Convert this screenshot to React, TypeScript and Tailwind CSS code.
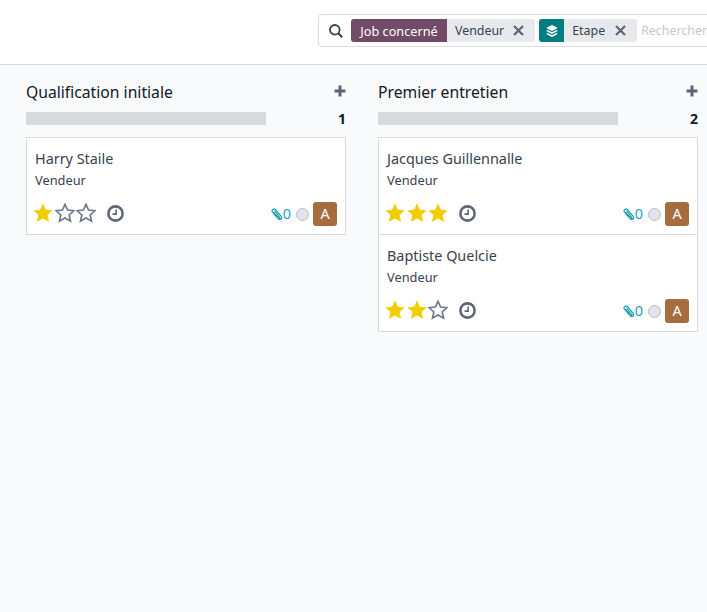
import React from "react";

const STAR = "M12 1.6l3.1 6.9 7.5.8-5.6 5.05 1.6 7.4L12 18l-6.6 3.75 1.6-7.4L1.4 9.3l7.5-.8z";

function Star({ on }: { on: boolean }) {
  return (
    <svg width="20" height="20" viewBox="0 0 24 24" className="shrink-0">
      <path d={STAR} fill={on ? "#f3cc00" : "#ffffff"} stroke={on ? "#f3cc00" : "#6b7a90"} strokeWidth={on ? 1 : 2} strokeLinejoin="miter" />
    </svg>
  );
}

function Clock() {
  return (
    <svg width="17" height="17" viewBox="0 0 16 16" className="shrink-0">
      <circle cx="8" cy="8" r="6.7" fill="none" stroke="#5f6478" strokeWidth="2.4" />
      <path d="M8.6 4.2v4.4H5.2" fill="none" stroke="#5f6478" strokeWidth="1.5" />
    </svg>
  );
}

function Clip() {
  return (
    <svg width="12" height="14" viewBox="0 0 12 13" className="shrink-0">
      <path
        d="M3.6 3.4l5 6.4c.9 1.2-.6 2.4-1.6 1.4L1.4 4.6C.2 3 2.4.4 4.2 1.8l6 7c1.6 2-1.2 4.4-3 2.6"
        fill="none"
        stroke="#17a2b8"
        strokeWidth="1.2"
      />
      <path d="M2.4 4.4l5.4 6.4" fill="none" stroke="#017e84" strokeWidth="1" />
    </svg>
  );
}

function Card({ name, stars, first }: { name: string; stars: number; first?: boolean }) {
  return (
    <div className={`bg-white border border-[#d8dadd] h-[98px] px-2 pt-[10px] ${first ? "" : "-mt-px"}`}>
      <div className="text-[14.4px] leading-[22px] text-[#374151]">{name}</div>
      <div className="text-[12.8px] leading-[18px] mt-[1px] text-[#374151]">Vendeur</div>
      <div className="flex items-center mt-[13px] h-6">
        <div className="flex items-center gap-[1.5px] -ml-[2px] -mt-[3px]">
          {[0, 1, 2].map((i) => (
            <Star key={i} on={i < stars} />
          ))}
        </div>
        <div className="ml-[11px] -mt-px">
          <Clock />
        </div>
        <div className="ml-auto flex items-center">
          <Clip />
          <span className="text-[14.4px] leading-none text-[#17a2b8]">0</span>
          <span className="ml-[5px] w-[13px] h-[13px] rounded-full bg-[#e2e4e9] border border-[#b8bcc4]" />
          <span className="ml-[4px] w-6 h-6 rounded-[3px] bg-[#a56d3e] text-white text-[14.4px] flex items-center justify-center">A</span>
        </div>
      </div>
    </div>
  );
}

function Column({ title, count, children }: { title: string; count: number; children: React.ReactNode }) {
  return (
    <div className="w-[320px] shrink-0">
      <div className="flex items-center justify-between h-[28px]">
        <span className="text-[15.7px] text-[#111827] pt-[2px]">{title}</span>
        <svg width="12" height="12" viewBox="0 0 12 12" className="mb-[3px] -ml-px">
          <path d="M6 .5v11M.5 6h11" stroke="#5f6478" strokeWidth="3" />
        </svg>
      </div>
      <div className="flex items-center justify-between mt-[6px] h-[13px]">
        <div className="w-[240px] h-[13px] bg-[#d8dadd]" />
        <span className="text-[14px] font-bold leading-none text-[#111827]">{count}</span>
      </div>
      <div className="mt-3">{children}</div>
    </div>
  );
}

function Close() {
  return (
    <svg width="11" height="11" viewBox="0 0 11 11" className="shrink-0">
      <path d="M1 1l9 9M10 1l-9 9" stroke="#5f6478" strokeWidth="2.2" />
    </svg>
  );
}

export default function App() {
  return (
    <div
      className="w-[707px] h-[612px] overflow-hidden bg-[#f9fafb] flex flex-col"
      style={{ fontFamily: '"Noto Sans", sans-serif' }}
    >
      <div className="h-[65px] shrink-0 bg-white border-b border-[#d8dadd] pl-[318px] pt-[14px]">
        <div className="w-[500px] h-[33px] border border-[#d8dadd] rounded-[4px] bg-white flex items-center pl-[10px] text-[12.4px] leading-none">
          <svg width="14" height="14" viewBox="0 0 14 14" className="shrink-0">
            <circle cx="5.8" cy="5.8" r="4.8" fill="none" stroke="#374151" strokeWidth="1.8" />
            <path d="M9.2 9.2l4 4" stroke="#374151" strokeWidth="2" />
          </svg>
          <div className="ml-2 flex items-center h-[23px] rounded-[3px] overflow-hidden bg-[#e7e9ed]">
            <span className="h-full w-24 bg-[#714b67] text-white text-[12.7px] pt-px flex items-center justify-center">Job concerné</span>
            <span className="text-[#374151] ml-2 pt-[2px]">Vendeur</span>
            <span className="ml-[9px] mr-[11px]">
              <Close />
            </span>
          </div>
          <div className="ml-1 flex items-center h-[23px] rounded-[3px] overflow-hidden bg-[#e7e9ed]">
            <span className="h-full w-[25px] bg-[#017e84] flex items-center justify-center">
              <svg width="14" height="14" viewBox="0 0 14 14">
                <path d="M7 1L1.2 4 7 7l5.8-3z" fill="#ffffff" />
                <path d="M2.6 6L1.2 7 7 10l5.8-3-1.4-1L7 8.2z" fill="#ffffff" />
                <path d="M2.6 9l-1.4 1L7 13l5.8-3-1.4-1L7 11.2z" fill="#ffffff" />
              </svg>
            </span>
            <span className="text-[#374151] ml-2 pt-[2px]">Etape</span>
            <span className="ml-[10px] mr-[11px]">
              <Close />
            </span>
          </div>
          <span className="ml-1 text-[#c4c7cd] pt-[2px]">Rechercher</span>
        </div>
      </div>
      <div className="flex gap-8 pl-[26px] pt-[13px]">
        <Column title="Qualification initiale" count={1}>
          <Card first name="Harry Staile" stars={1} />
        </Column>
        <Column title="Premier entretien" count={2}>
          <Card first name="Jacques Guillennalle" stars={3} />
          <Card name="Baptiste Quelcie" stars={2} />
        </Column>
      </div>
    </div>
  );
}
